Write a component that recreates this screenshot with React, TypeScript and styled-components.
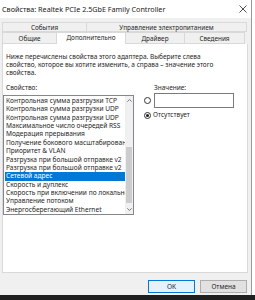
import styled, {createGlobalStyle} from "styled-components";

const GlobalStyle = createGlobalStyle`
    html, body {
        margin: 0;
        padding: 0;
        background: #ffffff;
    }

    body {
        font-family: "Noto Sans", "DejaVu Sans", sans-serif;
        color: #262626;
    }
`

const properties = [
    "Контрольная сумма разгрузки TCP",
    "Контрольная сумма разгрузки UDP",
    "Контрольная сумма разгрузки UDP",
    "Максимальное число очередей RSS",
    "Модерация прерывания",
    "Получение бокового масштабирования",
    "Приоритет & VLAN",
    "Разгрузка при большой отправке v2",
    "Разгрузка при большой отправке v2",
    "Сетевой адрес",
    "Скорость и дуплекс",
    "Скорость при включении по локальной сети",
    "Управление потоком",
    "Энергосберегающий Ethernet",
];

const selectedIndex = 9;

export default function App() {
    return <Screen>
        <GlobalStyle/>
        <Window>
            <TitleBar>
                <TitleText>Свойства: Realtek PCIe 2.5GbE Family Controller</TitleText>
                <CloseButton>
                    <svg width="8" height="8" viewBox="0 0 8 8">
                        <path d="M0.5 0.5 L7.5 7.5 M7.5 0.5 L0.5 7.5" stroke="#222" strokeWidth="0.8"/>
                    </svg>
                </CloseButton>
            </TitleBar>

            <Body>
                <TabRow>
                    <Tab width={85}>События</Tab>
                    <Tab width={161}>Управление электропитанием</Tab>
                </TabRow>
                <TabRow>
                    <Tab width={55} tall>Общие</Tab>
                    <Tab width={70} tall active>Дополнительно</Tab>
                    <Tab width={60} tall>Драйвер</Tab>
                    <Tab width={61} tall>Сведения</Tab>
                </TabRow>

                <Panel>
                    <Description>
                        Ниже перечислены свойства этого адаптера. Выберите слева<br/>
                        свойство, которое вы хотите изменить, а справа – значение этого<br/>
                        свойства.
                    </Description>

                    <Columns>
                        <LeftColumn>
                            <Label>Свойство:</Label>
                            <ListBox>
                                <Items>
                                    {properties.map((name, index) =>
                                        <Item key={index} selected={index === selectedIndex}>{name}</Item>
                                    )}
                                </Items>
                                <ScrollBar>
                                    <ScrollArrow>
                                        <svg width="5" height="3" viewBox="0 0 5 3">
                                            <path d="M0.3 2.7 L2.5 0.5 L4.7 2.7" stroke="#606060" strokeWidth="0.8" fill="none"/>
                                        </svg>
                                    </ScrollArrow>
                                    <ScrollTrack>
                                        <ScrollThumb/>
                                    </ScrollTrack>
                                    <ScrollArrow>
                                        <svg width="5" height="3" viewBox="0 0 5 3">
                                            <path d="M0.3 0.3 L2.5 2.5 L4.7 0.3" stroke="#606060" strokeWidth="0.8" fill="none"/>
                                        </svg>
                                    </ScrollArrow>
                                </ScrollBar>
                            </ListBox>
                        </LeftColumn>

                        <RightColumn>
                            <ValueLabel>Значение:</ValueLabel>
                            <OptionRow>
                                <Radio/>
                                <TextInput/>
                            </OptionRow>
                            <OptionRow>
                                <Radio checked/>
                                <OptionText>Отсутствует</OptionText>
                            </OptionRow>
                        </RightColumn>
                    </Columns>
                </Panel>

                <Footer>
                    <Button primary>OK</Button>
                    <Button>Отмена</Button>
                </Footer>
            </Body>
        </Window>
        <Taskbar/>
    </Screen>
}

const Screen = styled.div`
    width: 255px;
    height: 300px;
    display: flex;
    flex-direction: column;
    overflow: hidden;
`

const Window = styled.div`
    width: 251px;
    height: 295px;
    display: flex;
    flex-direction: column;
    background: #f0f0f0;
    border-right: 1px solid #9a9a9a;
`

const TitleBar = styled.div`
    height: 18px;
    background: #ffffff;
    display: flex;
    align-items: center;
    justify-content: space-between;
    padding: 0 4px 0 2px;
`

const TitleText = styled.span`
    font-size: 7.2px;
    color: #1a1a1a;
    white-space: nowrap;
`

const CloseButton = styled.span`
    display: flex;
    align-items: center;
`

const Body = styled.div`
    flex: 1;
    display: flex;
    flex-direction: column;
    padding: 4px 2px 0 2px;
`

const TabRow = styled.div`
    display: flex;
    align-items: flex-end;
`

const Tab = styled.div<{ width: number; tall?: boolean; active?: boolean }>`
    box-sizing: border-box;
    width: ${(p) => p.width}px;
    height: ${(p) => p.tall ? 12 : 10}px;
    display: flex;
    align-items: center;
    justify-content: center;
    font-size: 6.4px;
    white-space: nowrap;
    background: ${(p) => p.active ? '#ffffff' : '#f0f0f0'};
    border: 1px solid #d9d9d9;
    border-bottom: ${(p) => p.active ? 'none' : '1px solid #d9d9d9'};
    margin-left: -1px;
    margin-top: ${(p) => p.active ? -2 : 0}px;
    padding-bottom: ${(p) => p.active ? 2 : 0}px;

    &:first-child {
        margin-left: 0;
    }
`

const Panel = styled.div`
    box-sizing: border-box;
    width: 246px;
    height: 229px;
    background: #ffffff;
    border: 1px solid #d9d9d9;
    border-top: none;
    display: flex;
    flex-direction: column;
`

const Description = styled.p`
    margin: 0;
    padding: 9px 0 0 3px;
    font-size: 6.5px;
    line-height: 8px;
`

const Columns = styled.div`
    display: flex;
    padding-top: 7px;
`

const LeftColumn = styled.div`
    display: flex;
    flex-direction: column;
    gap: 3px;
`

const Label = styled.span`
    font-size: 6.5px;
    line-height: 8px;
    padding-left: 3px;
`

const ListBox = styled.div`
    box-sizing: border-box;
    width: 131px;
    height: 120px;
    border: 1px solid #828790;
    display: flex;
    background: #ffffff;
`

const Items = styled.div`
    flex: 1;
    display: flex;
    flex-direction: column;
    padding: 1px 0 0 1px;
    overflow: hidden;
`

const Item = styled.div<{ selected?: boolean }>`
    height: 8.4px;
    line-height: 8.4px;
    font-size: 6.6px;
    white-space: nowrap;
    overflow: hidden;
    padding-left: 1px;
    background: ${(p) => p.selected ? '#0078d7' : 'transparent'};
    color: ${(p) => p.selected ? '#ffffff' : '#262626'};
`

const ScrollBar = styled.div`
    width: 8px;
    display: flex;
    flex-direction: column;
    background: #f0f0f0;
`

const ScrollArrow = styled.div`
    height: 9px;
    display: flex;
    align-items: center;
    justify-content: center;
`

const ScrollTrack = styled.div`
    flex: 1;
    display: flex;
    flex-direction: column;
    justify-content: flex-end;
    padding: 0 1px 2px 1px;
`

const ScrollThumb = styled.div`
    height: 56px;
    background: #cdcdcd;
`

const RightColumn = styled.div`
    display: flex;
    flex-direction: column;
    padding-left: 10px;
`

const ValueLabel = styled.span`
    font-size: 6.5px;
    line-height: 8px;
    padding-left: 10px;
`

const OptionRow = styled.div`
    display: flex;
    align-items: center;
    gap: 2px;
    margin-top: 1px;

    & + & {
        margin-top: 3px;
    }
`

const Radio = styled.span<{ checked?: boolean }>`
    box-sizing: border-box;
    width: 7px;
    height: 7px;
    border-radius: 50%;
    border: 1px solid #333333;
    background: #ffffff;
    display: flex;
    align-items: center;
    justify-content: center;

    &::after {
        content: "";
        display: ${(p) => p.checked ? 'block' : 'none'};
        width: 3px;
        height: 3px;
        border-radius: 50%;
        background: #1a1a1a;
    }
`

const TextInput = styled.div`
    box-sizing: border-box;
    width: 80px;
    height: 15px;
    margin-left: 1px;
    border: 1px solid #7a7a7a;
    background: #ffffff;
`

const OptionText = styled.span`
    font-size: 6.5px;
    line-height: 8px;
`

const Footer = styled.div`
    display: flex;
    justify-content: flex-end;
    gap: 5px;
    padding: 7px 2px 0 0;
`

const Button = styled.div<{ primary?: boolean }>`
    box-sizing: border-box;
    width: 47px;
    height: 13px;
    display: flex;
    align-items: center;
    justify-content: center;
    font-size: 6.5px;
    background: ${(p) => p.primary ? '#e5f1fb' : '#e1e1e1'};
    border: 1px solid ${(p) => p.primary ? '#0078d7' : '#adadad'};
`

const Taskbar = styled.div`
    height: 5px;
    background: #1f1f1f;
`
